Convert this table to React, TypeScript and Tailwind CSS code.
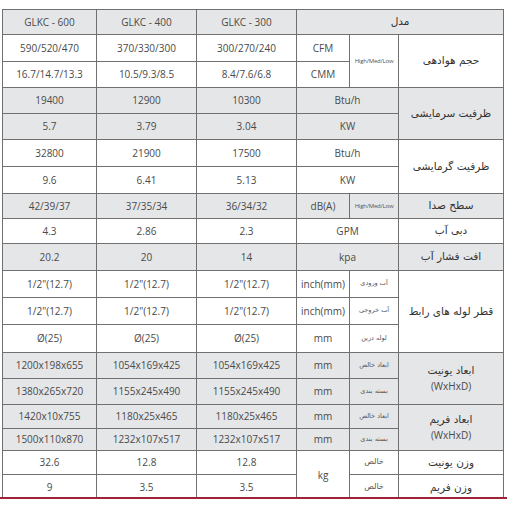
import React from "react";

const G = "bg-[#e5e6e8]";
const W = "bg-white";

type Cell = { t: React.ReactNode; cs?: number; rs?: number; cls?: string };

const fa = "font-['DejaVu_Sans',sans-serif]";

function Row({ h, bg, cells }: { h: number; bg: string; cells: Cell[] }) {
  return (
    <tr className={bg} style={{ height: h }}>
      {cells.map((c, i) => (
        <td
          key={i}
          colSpan={c.cs}
          rowSpan={c.rs}
          className={`border border-[#707070] text-center align-middle p-0 pb-[1px] leading-none ${c.cls ?? "text-[10px]"}`}
        >
          {c.t}
        </td>
      ))}
    </tr>
  );
}

const sub = `${fa} text-[6.5px] text-[#555]`;
const lab = `${fa} text-[10.5px] text-[#333]`;
const hml = "text-[6px] tracking-[-0.2px] text-[#555]";
const kh = `${fa} text-[8px] text-[#555]`;

export default function App() {
  return (
    <div className="w-[507px] h-[507px] bg-white overflow-hidden font-['Open_Sans',sans-serif] text-[#4a4a4a]">
      <div className="h-[497px] overflow-hidden pt-[9px] pl-[2px]">
        <table className="border-collapse table-fixed w-[501px]">
          <colgroup>
            <col className="w-[94px]" />
            <col className="w-[100px]" />
            <col className="w-[100px]" />
            <col className="w-[53px]" />
            <col className="w-[49px]" />
            <col className="w-[105px]" />
          </colgroup>
          <tbody>
            <Row h={25} bg={G} cells={[{ t: "GLKC - 600" }, { t: "GLKC - 400" }, { t: "GLKC - 300" }, { t: "مدل", cs: 3, cls: lab }]} />
            <Row h={27} bg={W} cells={[{ t: "590/520/470" }, { t: "370/330/300" }, { t: "300/270/240" }, { t: "CFM" }, { t: "High/Med/Low", rs: 2, cls: hml }, { t: "حجم هوادهی", rs: 2, cls: lab }]} />
            <Row h={26} bg={W} cells={[{ t: "16.7/14.7/13.3" }, { t: "10.5/9.3/8.5" }, { t: "8.4/7.6/6.8" }, { t: "CMM" }]} />
            <Row h={26} bg={G} cells={[{ t: "19400" }, { t: "12900" }, { t: "10300" }, { t: "Btu/h", cs: 2 }, { t: "ظرفیت سرمایشی", rs: 2, cls: lab }]} />
            <Row h={26} bg={G} cells={[{ t: "5.7" }, { t: "3.79" }, { t: "3.04" }, { t: "KW", cs: 2 }]} />
            <Row h={27} bg={W} cells={[{ t: "32800" }, { t: "21900" }, { t: "17500" }, { t: "Btu/h", cs: 2 }, { t: "ظرفیت گرمایشی", rs: 2, cls: lab }]} />
            <Row h={27} bg={W} cells={[{ t: "9.6" }, { t: "6.41" }, { t: "5.13" }, { t: "KW", cs: 2 }]} />
            <Row h={25} bg={G} cells={[{ t: "42/39/37" }, { t: "37/35/34" }, { t: "36/34/32" }, { t: "dB(A)" }, { t: "High/Med/Low", cls: hml }, { t: "سطح صدا", cls: lab }]} />
            <Row h={25} bg={W} cells={[{ t: "4.3" }, { t: "2.86" }, { t: "2.3" }, { t: "GPM", cs: 2 }, { t: "دبی آب", cls: lab }]} />
            <Row h={27} bg={G} cells={[{ t: "20.2" }, { t: "20" }, { t: "14" }, { t: "kpa", cs: 2 }, { t: "افت فشار آب", cls: lab }]} />
            <Row h={27} bg={W} cells={[{ t: "1/2\"(12.7)" }, { t: "1/2\"(12.7)" }, { t: "1/2\"(12.7)" }, { t: "inch(mm)" }, { t: "آب ورودی", cls: sub }, { t: "قطر لوله های رابط", rs: 3, cls: lab }]} />
            <Row h={27} bg={W} cells={[{ t: "1/2\"(12.7)" }, { t: "1/2\"(12.7)" }, { t: "1/2\"(12.7)" }, { t: "inch(mm)" }, { t: "آب خروجی", cls: sub }]} />
            <Row h={28} bg={W} cells={[{ t: "Ø(25)" }, { t: "Ø(25)" }, { t: "Ø(25)" }, { t: "mm" }, { t: "لوله درین", cls: sub }]} />
            <Row h={26} bg={G} cells={[{ t: "1200x198x655" }, { t: "1054x169x425" }, { t: "1054x169x425" }, { t: "mm" }, { t: "ابعاد خالص", cls: sub }, { t: <span className="inline-flex flex-col items-center gap-[5px]"><span className={lab}>ابعاد یونیت</span><span className="text-[10px]">(WxHxD)</span></span>, rs: 2 }]} />
            <Row h={26} bg={G} cells={[{ t: "1380x265x720" }, { t: "1155x245x490" }, { t: "1155x245x490" }, { t: "mm" }, { t: "بسته بندی", cls: sub }]} />
            <Row h={24} bg={G} cells={[{ t: "1420x10x755" }, { t: "1180x25x465" }, { t: "1180x25x465" }, { t: "mm" }, { t: "ابعاد خالص", cls: sub }, { t: <span className="inline-flex flex-col items-center gap-[5px]"><span className={lab}>ابعاد فریم</span><span className="text-[10px]">(WxHxD)</span></span>, rs: 2 }]} />
            <Row h={22} bg={G} cells={[{ t: "1500x110x870" }, { t: "1232x107x517" }, { t: "1232x107x517" }, { t: "mm" }, { t: "بسته بندی", cls: sub }]} />
            <Row h={24} bg={W} cells={[{ t: "32.6" }, { t: "12.8" }, { t: "12.8" }, { t: "kg", rs: 2 }, { t: "خالص", cls: kh }, { t: "وزن یونیت", cls: lab }]} />
            <Row h={26} bg={W} cells={[{ t: "9" }, { t: "3.5" }, { t: "3.5" }, { t: "خالص", cls: kh }, { t: "وزن فریم", cls: lab }]} />
          </tbody>
        </table>
      </div>
      <div className="h-[2px] bg-[#9e2238]" />
    </div>
  );
}
